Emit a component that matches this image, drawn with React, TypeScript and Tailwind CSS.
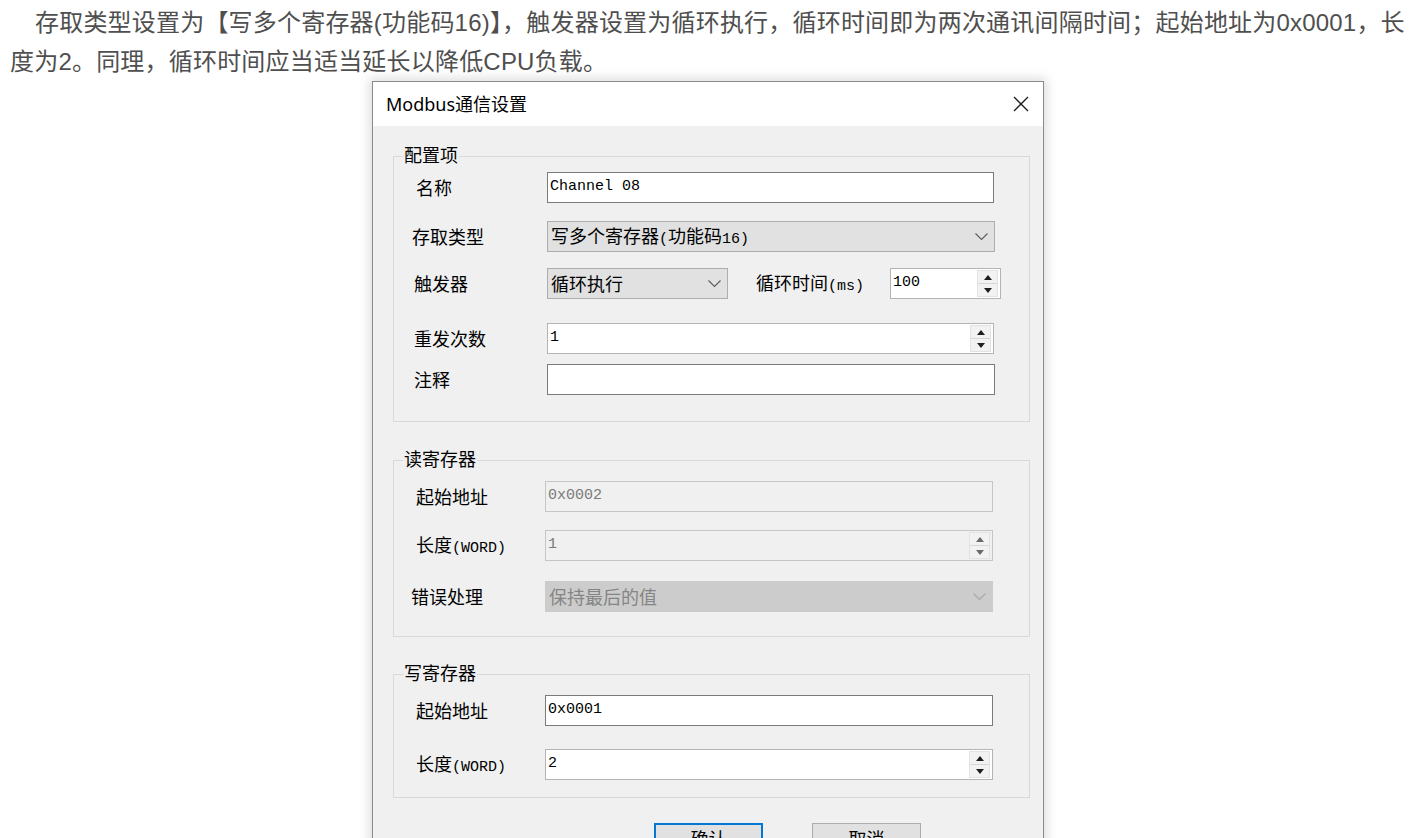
import type { ReactNode } from "react"

// === fonts ===
const cjk = "font-['Noto_Sans_CJK_SC','Noto_Sans',sans-serif]"
const mono = "font-['Liberation_Mono','Noto_Sans_CJK_SC',monospace]"

const Latin = ({ children }: { children: ReactNode }) => (
  <span className={`${mono} text-[15px]`}>{children}</span>
)

function Arrow({ up, color }: { up?: boolean; color: string }) {
  return (
    <svg width="8" height="5" viewBox="0 0 8 5">
      <path d={up ? "M0 5 L4 0 L8 5 Z" : "M0 0 L8 0 L4 5 Z"} fill={color} />
    </svg>
  )
}

function Spinner({ disabled }: { disabled?: boolean }) {
  const c = disabled ? "#6a6a6a" : "#1e1e1e"
  return (
    <div className="mr-[2px] flex h-[27px] w-[21px] flex-col border border-[#e2e2e2] bg-[#f2f2f2]">
      <div className="flex flex-1 items-center justify-center border-b border-[#d6d6d6]">
        <Arrow up color={c} />
      </div>
      <div className="flex flex-1 items-center justify-center">
        <Arrow color={c} />
      </div>
    </div>
  )
}

function Chevron({ color = "#5a5a5a" }: { color?: string }) {
  return (
    <svg width="13" height="8" viewBox="0 0 13 8" className="mr-[6px]">
      <polyline points="0.5,0.5 6.5,6.5 12.5,0.5" fill="none" stroke={color} strokeWidth="1.1" />
    </svg>
  )
}

function TextBox({ value, w = "w-[447px]", spin, disabled }: { value?: ReactNode; w?: string; spin?: boolean; disabled?: boolean }) {
  const look = disabled
    ? "border-[#c6c6c6] bg-[#f0f0f0] text-[#7a7a7a]"
    : spin
      ? "border-[#b4b4b4] bg-white text-black"
      : "border-[#7a7a7a] bg-white text-black"
  return (
    <div className={`flex h-[31px] ${w} items-center justify-between border ${look} pl-[2px]`}>
      <span className={`${mono} text-[15px]`}>{value}</span>
      {spin && <Spinner disabled={disabled} />}
    </div>
  )
}

function Select({ value, w = "w-[448px]", disabled }: { value: ReactNode; w?: string; disabled?: boolean }) {
  const look = disabled
    ? "border-[#cccccc] bg-[#cccccc] text-[#858585]"
    : "border-[#adadad] bg-[#e1e1e1] text-black"
  return (
    <div className={`flex h-[31px] ${w} items-center justify-between border ${look} pl-[3px] text-[18px]`}>
      <span>{value}</span>
      <Chevron color={disabled ? "#a8a8a8" : "#5a5a5a"} />
    </div>
  )
}

function Row({ label, pad, labelW, mt, children }: { label: ReactNode; pad: string; labelW: string; mt: string; children: ReactNode }) {
  return (
    <div className={`flex items-center ${mt}`}>
      <div className={`${pad} ${labelW} shrink-0 text-[18px] text-black`}>{label}</div>
      {children}
    </div>
  )
}

function Group({ title, className, children }: { title: string; className: string; children: ReactNode }) {
  return (
    <fieldset className={`border border-[#d9d9d9] ${className}`}>
      <legend className="ml-[9px] px-[1px] pb-[4px] text-[18px] leading-[20px] text-black">{title}</legend>
      {children}
    </fieldset>
  )
}

export default function App() {
  return (
    <div className={`h-[838px] overflow-hidden bg-white ${cjk}`}>
      {/* === article paragraph === */}
      <p className="px-[10px] pt-[3px] indent-[25px] font-['Liberation_Sans','Noto_Sans_CJK_SC',sans-serif] text-[24px] leading-[39px] tracking-[0.2px] whitespace-nowrap text-[#4f4f4f]">
        存取类型设置为【写多个寄存器(功能码16)】，触发器设置为循环执行，循环时间即为两次通讯间隔时间；起始地址为0x0001，长
        <br />
        度为2。同理，循环时间应当适当延长以降低CPU负载。
      </p>

      {/* === dialog === */}
      <div className="ml-[372px] w-[672px] border border-[#8a8a8a] bg-[#f0f0f0] shadow-[0_0_10px_3px_rgba(0,0,0,0.13)]">
        <div className="flex h-[44px] items-center justify-between bg-white pl-[13px] pr-[14px]">
          <span className="font-['Noto_Sans','Noto_Sans_CJK_SC',sans-serif] text-[18px] text-black">Modbus通信设置</span>
          <svg width="16" height="16" viewBox="0 0 16 16">
            <path d="M1 1 L15 15 M15 1 L1 15" stroke="#1a1a1a" strokeWidth="1.3" />
          </svg>
        </div>

        <div className="pl-[20px] pr-[13px] pt-[18px] pb-[20px]">
          {/* 配置项 */}
          <Group title="配置项" className="pb-[26px]">
            <Row label="名称" pad="pl-[22px]" labelW="w-[153px]" mt="mt-[4px]">
              <TextBox value="Channel 08" />
            </Row>
            <Row label="存取类型" pad="pl-[18px]" labelW="w-[153px]" mt="mt-[18px]">
              <Select value={<>写多个寄存器<Latin>(</Latin>功能码<Latin>16)</Latin></>} />
            </Row>
            <Row label="触发器" pad="pl-[20px]" labelW="w-[153px]" mt="mt-[16px]">
              <Select value="循环执行" w="w-[181px]" />
              <span className="ml-[28px] w-[134px] text-[18px]">
                循环时间<Latin>(ms)</Latin>
              </span>
              <TextBox value="100" w="w-[111px]" spin />
            </Row>
            <Row label="重发次数" pad="pl-[20px]" labelW="w-[153px]" mt="mt-[24px]">
              <TextBox value="1" spin />
            </Row>
            <Row label="注释" pad="pl-[20px]" labelW="w-[153px]" mt="mt-[10px]">
              <TextBox w="w-[448px]" />
            </Row>
          </Group>

          {/* 读寄存器 */}
          <Group title="读寄存器" className="mt-[26px] pb-[24px]">
            <Row label="起始地址" pad="pl-[22px]" labelW="w-[151px]" mt="mt-[9px]">
              <TextBox value="0x0002" w="w-[448px]" disabled />
            </Row>
            <Row label={<>长度<Latin>(WORD)</Latin></>} pad="pl-[22px]" labelW="w-[151px]" mt="mt-[18px]">
              <TextBox value="1" w="w-[448px]" spin disabled />
            </Row>
            <Row label="错误处理" pad="pl-[17px]" labelW="w-[151px]" mt="mt-[20px]">
              <Select value="保持最后的值" w="w-[448px]" disabled />
            </Row>
          </Group>

          {/* 写寄存器 */}
          <Group title="写寄存器" className="mt-[25px] pb-[17px]">
            <Row label="起始地址" pad="pl-[22px]" labelW="w-[151px]" mt="mt-[9px]">
              <TextBox value="0x0001" w="w-[448px]" />
            </Row>
            <Row label={<>长度<Latin>(WORD)</Latin></>} pad="pl-[22px]" labelW="w-[151px]" mt="mt-[23px]">
              <TextBox value="2" w="w-[448px]" spin />
            </Row>
          </Group>

          {/* buttons */}
          <div className="mt-[25px] flex gap-[49px] pl-[261px]">
            <button className="h-[30px] w-[109px] border-2 border-[#0078d7] bg-[#e1e1e1] text-[18px] leading-none text-black">
              确认
            </button>
            <button className="h-[30px] w-[109px] border border-[#adadad] bg-[#e1e1e1] text-[18px] leading-none text-black">
              取消
            </button>
          </div>
        </div>
      </div>
    </div>
  )
}
